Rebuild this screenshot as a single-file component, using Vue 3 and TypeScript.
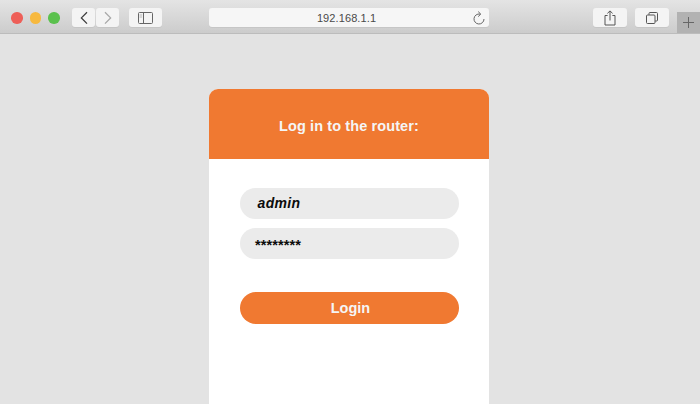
<script setup lang="ts">
const stars = '********'
</script>

<template>
  <div class="page">
    <header class="toolbar">
      <div class="lights">
        <span class="light red"></span>
        <span class="light yellow"></span>
        <span class="light green"></span>
      </div>
      <div class="nav">
        <div class="btn nav-btn">
          <svg width="10" height="14" viewBox="0 0 10 14"><path d="M8 1.2 2.4 6.9 8 12.6" fill="none" stroke="#3c3c3c" stroke-width="1.3"/></svg>
        </div>
        <div class="btn nav-btn">
          <svg width="10" height="14" viewBox="0 0 10 14"><path d="M2 1.2 7.6 6.9 2 12.6" fill="none" stroke="#a8a8a8" stroke-width="1.3"/></svg>
        </div>
      </div>
      <div class="btn side-btn">
        <svg width="15" height="12" viewBox="0 0 15 12"><rect x=".5" y=".5" width="14" height="11" rx="1" fill="none" stroke="#666" stroke-width="1"/><path d="M5.5 1v10" stroke="#666" stroke-width="1"/><path d="M1.6 3h2.6M1.6 5h2.6" stroke="#aaa" stroke-width=".8"/></svg>
      </div>
      <div class="address">
        <span class="url">192.168.1.1</span>
        <svg class="reload" width="12" height="14" viewBox="0 0 12 14"><path d="M7 3.1A5 5 0 1 0 11 8" fill="none" stroke="#666" stroke-width="1"/><path d="M5.2 .6 7.8 3.1 5.2 5.6" fill="none" stroke="#666" stroke-width="1"/></svg>
      </div>
      <div class="btn act-btn share">
        <svg width="12" height="16" viewBox="0 0 12 16"><path d="M3.6 5.5H1v9.5h10V5.5H8.4" fill="none" stroke="#555" stroke-width="1"/><path d="M6 10.5V1M3.4 3.4 6 .9l2.6 2.5" fill="none" stroke="#555" stroke-width="1"/></svg>
      </div>
      <div class="btn act-btn tabs">
        <svg width="12" height="12" viewBox="0 0 12 12"><rect x=".5" y="3" width="8.5" height="8.5" rx="1" fill="none" stroke="#555"/><path d="M3 2.8V1.5a1 1 0 0 1 1-1h6.500a1 1 0 0 1 1 1V8a1 1 0 0 1-1 1H9.200" fill="none" stroke="#555"/></svg>
      </div>
      <div class="plus">
        <svg width="11" height="11" viewBox="0 0 11 11"><path d="M5.500 0v11M0 5.500h11" stroke="#666" stroke-width="1"/></svg>
      </div>
    </header>
    <main class="content">
      <section class="card">
        <div class="card-head">Log in to the router:</div>
        <form class="card-body" @submit.prevent>
          <div class="field user">admin</div>
          <div class="field pass">{{ stars }}</div>
          <button class="login" type="button">Login</button>
        </form>
      </section>
    </main>
  </div>
</template>

<style>
html, body { margin: 0; padding: 0; background: #e3e3e3; }
</style>

<style scoped>
.page {
  width: 700px;
  height: 404px;
  overflow: hidden;
  display: flex;
  flex-direction: column;
  background: #e3e3e3;
  font-family: "Liberation Sans", Arial, sans-serif;
}
.toolbar {
  flex: none;
  height: 34px;
  display: flex;
  align-items: flex-start;
  padding-top: 8px;
  box-sizing: border-box;
  position: relative;
  background: linear-gradient(#e4e4e4, #cccccc);
  border-bottom: 1px solid #bcbcbc;
}
.lights { display: flex; gap: 7px; margin: 4px 0 0 11px; }
.light { width: 11.5px; height: 11.5px; border-radius: 50%; }
.red { background: #ee5f58; }
.yellow { background: #f7b93f; }
.green { background: #5bc14e; }
.btn {
  height: 19px;
  display: flex;
  align-items: center;
  justify-content: center;
  background: #f4f4f4;
  border-radius: 3px;
  box-shadow: 0 1px 0 #c6c6c6;
}
.nav { display: flex; gap: 1px; margin-left: 12.5px; }
.nav-btn { width: 23px; }
.side-btn { width: 33px; margin-left: 10px; }
.address {
  width: 280px;
  height: 19px;
  margin-left: 47px;
  padding-right: 5px;
  box-sizing: border-box;
  position: relative;
  display: flex;
  align-items: center;
  justify-content: center;
  background: #f6f6f6;
  border-radius: 3px;
  box-shadow: 0 1px 0 #c6c6c6;
}
.url { font-size: 11px; letter-spacing: .1px; color: #4a4a4a; }
.reload { position: absolute; right: 4px; top: 2.500px; }
.act-btn { width: 34px; }
.share { margin-left: 104px; }
.tabs { margin-left: 8px; }
.plus {
  position: absolute;
  right: 0;
  top: 12px;
  width: 23px;
  height: 21px;
  background: #b2b2b2;
  display: flex;
  align-items: center;
  justify-content: center;
}
.content {
  flex: 1;
  display: flex;
  padding: 55px 0 0 209px;
  min-height: 0;
}
.card {
  width: 280px;
  height: 340px;
  flex: none;
  background: #fff;
  border-radius: 9px 9px 0 0;
  overflow: hidden;
}
.card-head {
  height: 70px;
  box-sizing: border-box;
  padding-top: 4px;
  display: flex;
  align-items: center;
  justify-content: center;
  background: #f07931;
  color: #f5f5f5;
  font-size: 14.500px;
  font-weight: 700;
  letter-spacing: .1px;
}
.card-body {
  display: flex;
  flex-direction: column;
  padding: 29px 30px 0 31px;
}
.field {
  height: 31px;
  box-sizing: border-box;
  border-radius: 16px;
  background: #ebebeb;
  color: #0c0c0c;
  display: flex;
  align-items: center;
  font-weight: 700;
}
.user { font-size: 14px; font-style: italic; padding-left: 17.500px; padding-bottom: 1px; letter-spacing: .35px; }
.pass { font-size: 14.500px; padding-left: 15px; padding-top: 3px; margin-top: 9px; letter-spacing: .1px; }
.login {
  margin: 33px 0 0;
  height: 32px;
  padding: 0 0 0 2px;
  border: 0;
  border-radius: 16px;
  background: #f07931;
  color: #f5f5f5;
  font: 700 14.500px "Liberation Sans", Arial, sans-serif;
}
</style>
